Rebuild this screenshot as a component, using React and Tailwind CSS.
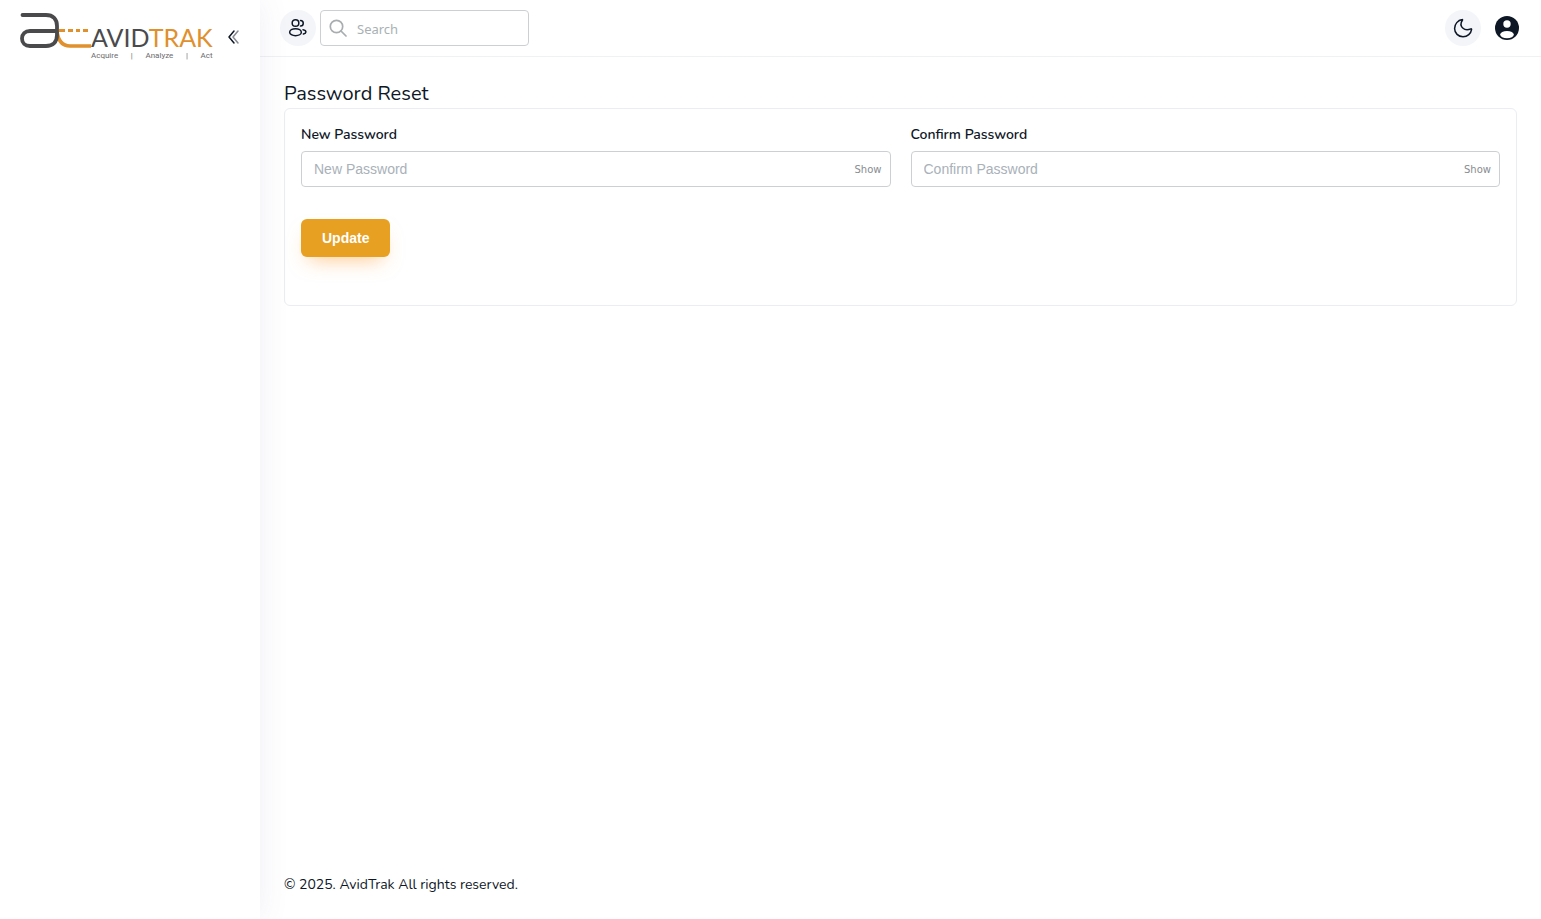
import React from "react";

function Logo() {
  return (
    <a href="#" aria-label="AvidTrak home" className="flex items-start">
      <svg width="71" height="37" viewBox="0 0 71 37" fill="none" className="shrink-0">
        <path d="M37 19C38 28 42 34 50 34H71" stroke="#e0902c" strokeWidth="3.600" />
        <path d="M39 18.500H45M48 18.500H53M56 18.500H60M63 18.500H68" stroke="#e0902c" strokeWidth="3" />
        <path d="M2.500 3H26C33 3 37 7 37 14V23C37 30 33 34 26 34H10C5 34 2 31 2 26.500C2 22 5 19 10 19H37" stroke="#4a4a4c" strokeWidth="3.800" strokeLinecap="round" />
      </svg>
      <span className="flex flex-col pt-3">
        <span className="font-[Lato,sans-serif] text-[25px] leading-[26px] text-[#4a4a4c]">
          AVID<span className="text-[#e0902c]">TRAK</span>
        </span>
        <span className="flex justify-between font-[Roboto,sans-serif] text-[8px] leading-[12px] text-[#6b6b6e]">
          <span>Acquire</span>
          <span>|</span>
          <span>Analyze</span>
          <span>|</span>
          <span>Act</span>
        </span>
      </span>
    </a>
  );
}

function Sidebar() {
  return (
    <aside className="relative z-10 w-[260px] shrink-0 bg-white shadow-[0_0_28px_0_rgba(94,92,154,0.1)]">
      <div className="flex items-start justify-between pt-3 pr-5 pl-5">
        <Logo />
        <button type="button" aria-label="Collapse sidebar" className="mt-4 text-[#0e1726]">
          <svg width="14" height="18" viewBox="0 0 14 18" fill="none" stroke="currentColor" strokeLinecap="round" strokeLinejoin="round">
            <path d="M8 3L3 9L8 15" strokeWidth="1.500" />
            <path d="M12 3L7 9L12 15" strokeWidth="1.500" opacity="0.5" />
          </svg>
        </button>
      </div>
    </aside>
  );
}

function Header() {
  return (
    <header className="flex items-start justify-between border-b border-[#f0f1f3] py-[10px] pr-[22px] pl-5">
      <div className="flex gap-1">
        <button type="button" aria-label="Users" className="flex size-9 items-center justify-center rounded-full bg-[#f3f5f9] text-[#0e1726]">
          <svg width="20" height="20" viewBox="0 0 24 24" fill="none" stroke="currentColor" strokeWidth="1.800" strokeLinecap="round">
            <circle cx="9" cy="6" r="4" />
            <path d="M15 9.500a3.300 3.300 0 1 0 0-6.600" />
            <ellipse cx="9" cy="17" rx="7" ry="4.200" />
            <path d="M18 14c2 .380 3.500 1.360 3.500 2.700 0 1.230-1.200 2.120-3 2.570" />
          </svg>
        </button>
        <label className="flex h-9 w-[209px] items-center gap-[10px] rounded border border-[#cdd0d3] px-2">
          <svg width="18" height="18" viewBox="0 0 18 18" fill="none" stroke="#a9adb0" strokeWidth="1.700" strokeLinecap="round">
            <circle cx="7.500" cy="7.500" r="6.200" />
            <path d="M12 12L17 17" />
          </svg>
          <input type="search" aria-label="Search" placeholder="Search" className="min-w-0 flex-1 pt-1 font-['Noto_Sans',sans-serif] text-[13px] outline-none placeholder:text-[#a9b1b4]" />
        </label>
      </div>
      <div className="flex items-center gap-[14px]">
        <button type="button" aria-label="Dark mode" className="flex size-9 items-center justify-center rounded-full bg-[#f3f5f9] text-[#0e1726]">
          <svg width="20" height="20" viewBox="0 0 20 20" fill="none" stroke="currentColor" strokeWidth="1.500" strokeLinejoin="round">
            <path d="M9.300 1.600C4.800 2.300 1.600 6 1.600 10.500C1.600 15.200 5.300 18.700 10 18.700C14.500 18.700 18 15.600 18.600 11.400C18.600 10.800 18.200 10.600 17.700 10.900C11.500 13.600 5.500 8.500 9.200 2.500C9.600 1.900 9.700 1.500 9.300 1.600Z" />
          </svg>
        </button>
        <button type="button" aria-label="Account" className="text-[#0e1726]">
          <svg width="24" height="24" viewBox="0 0 24 24" className="block">
            <circle cx="12" cy="12" r="12" fill="currentColor" />
            <circle cx="12" cy="8" r="3.700" fill="#fff" />
            <ellipse cx="12" cy="18.600" rx="6.800" ry="3.600" fill="#fff" />
          </svg>
        </button>
      </div>
    </header>
  );
}

function PasswordField({ id, label }) {
  return (
    <div className="min-w-0 flex-1">
      <label htmlFor={id} className="block pb-[6px] text-[14px] leading-5 font-semibold text-[#0e1726]">{label}</label>
      <div className="flex h-9 items-center rounded border border-[#cdd0d3] pr-2 pl-3">
        <input id={id} type="password" placeholder={label} className="min-w-0 flex-1 font-['Liberation_Sans',sans-serif] text-[14px] outline-none placeholder:text-[#a9b1b9]" />
        <button type="button" className="font-['DejaVu_Sans',sans-serif] text-[10px] text-[#888c91]">Show</button>
      </div>
    </div>
  );
}

export default function App() {
  return (
    <div className="flex min-h-screen bg-white font-[Nunito,Lato,sans-serif] text-[#0e1726]">
      <Sidebar />
      <div className="flex min-w-0 flex-1 flex-col">
        <Header />
        <main className="flex-1 p-6">
          <h1 className="pb-[2px] text-[20px] leading-[25px]">Password Reset</h1>
          <form onSubmit={(e) => e.preventDefault()} className="rounded-md border border-[#ebedf2] px-4 pt-4 pb-12">
            <div className="flex gap-5">
              <PasswordField id="new-password" label="New Password" />
              <PasswordField id="confirm-password" label="Confirm Password" />
            </div>
            <button type="submit" className="mt-8 h-[38px] rounded-md bg-[#e7a022] px-[21px] font-['Liberation_Sans',sans-serif] text-[14px] font-bold text-white shadow-[0_10px_20px_-8px_rgba(255,160,60,0.6)]">Update</button>
          </form>
        </main>
        <footer className="px-6 pb-6 text-[14px] leading-5">© 2025. AvidTrak All rights reserved.</footer>
      </div>
    </div>
  );
}
